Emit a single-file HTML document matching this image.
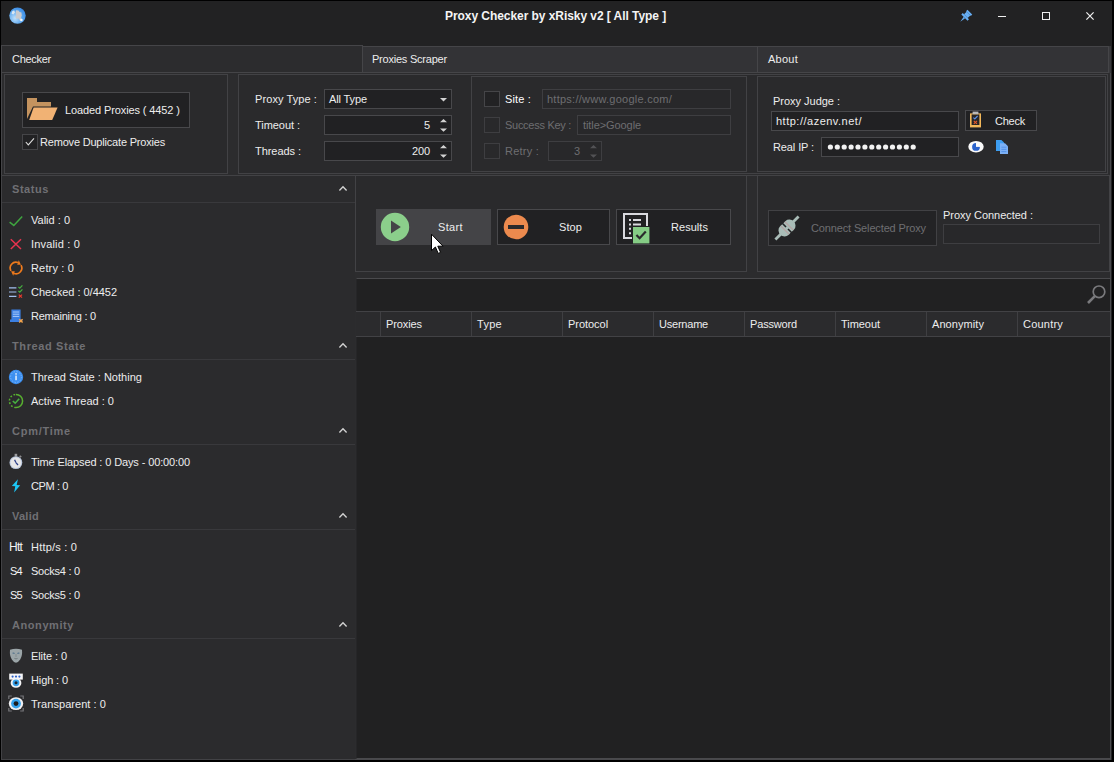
<!DOCTYPE html>
<html lang="en">
<head>
<meta charset="utf-8">
<title>Proxy Checker by xRisky v2 [ All Type ]</title>
<style>
*{box-sizing:border-box;margin:0;padding:0}
html,body{width:1114px;height:762px;overflow:hidden;background:#000}
body{position:relative;font-family:"Liberation Sans",sans-serif;font-size:11px;color:#ededed;line-height:14px}
.a{position:absolute}
.t{position:absolute;white-space:nowrap;height:14px;line-height:14px}
.box{position:absolute;border:1px solid #424245;background:#2a2a2c}
.inp{position:absolute;border:1px solid #48484b;background:#212123}
.inpd{position:absolute;border:1px solid #3e3e41;background:#28282a}
.btn{position:absolute;border:1px solid #48484b;background:#212123}
.cb{position:absolute;width:16px;height:16px;border:1px solid #454548;background:#222224}
.cbd{position:absolute;width:16px;height:16px;border:1px solid #3e3e41;background:#29292b}
.hl{position:absolute;height:1px;background:#424245}
.vl{position:absolute;width:1px;background:#3f3f42}
.sep{position:absolute;left:2px;width:353px;height:1px;background:#39393c}
svg{position:absolute;overflow:visible}
</style>
</head>
<body>
<!-- window frame -->
<div class="a" style="left:1px;top:1px;width:1111px;height:759px;background:#222223"></div>

<!-- tab strip -->
<div class="a" style="left:362px;top:46px;width:747px;height:27px;background:#333336;border:1px solid #454548"></div>
<div class="vl" style="left:757px;top:47px;height:25px;background:#454548"></div>
<div class="a" style="left:1px;top:45px;width:362px;height:28px;background:#2c2c2e;border:1px solid #454548"></div>

<div class="a" style="left:1109px;top:46px;width:2px;height:27px;background:#38383b"></div>
<!-- tab page -->
<div class="a" style="left:1px;top:73px;width:1110px;height:687px;background:#2c2c2e;border-left:1px solid #454548;border-right:1px solid #48484b;border-bottom:1px solid #48484b"></div>

<!-- row 1 boxes -->
<div class="box" style="left:4px;top:74px;width:224px;height:100px"></div>
<div class="box" style="left:238px;top:74px;width:870px;height:100px"></div>
<div class="box" style="left:471px;top:76px;width:276px;height:96px"></div>
<div class="box" style="left:757px;top:76px;width:349px;height:96px"></div>

<!-- row 2 -->
<div class="hl" style="left:2px;top:175px;width:1108px"></div>
<div class="box" style="left:355px;top:175px;width:392px;height:97px"></div>
<div class="box" style="left:757px;top:175px;width:353px;height:97px"></div>

<!-- left panel -->
<div class="a" style="left:1px;top:175px;width:354px;height:585px;background:#2b2b2d;border:1px solid #424245;border-right:none"></div>
<div class="sep" style="top:202px"></div>
<div class="sep" style="top:359px"></div>
<div class="sep" style="top:444px"></div>
<div class="sep" style="top:529px"></div>
<div class="sep" style="top:638px"></div>

<!-- grid -->
<div class="a" style="left:356px;top:278px;width:755px;height:481px;background:#212122;border:1px solid #4a4a4d;border-left:1px solid #262628"></div>
<div class="a" style="left:356px;top:311px;width:754px;height:26px;background:#2b2b2d;border-top:1px solid #424245;border-bottom:1px solid #424245"></div>
<div class="vl" style="left:380px;top:312px;height:24px"></div>
<div class="vl" style="left:471px;top:312px;height:24px"></div>
<div class="vl" style="left:562px;top:312px;height:24px"></div>
<div class="vl" style="left:653px;top:312px;height:24px"></div>
<div class="vl" style="left:744px;top:312px;height:24px"></div>
<div class="vl" style="left:835px;top:312px;height:24px"></div>
<div class="vl" style="left:926px;top:312px;height:24px"></div>
<div class="vl" style="left:1017px;top:312px;height:24px"></div>

<!-- controls row 1 -->
<div class="btn" style="left:22px;top:92px;width:168px;height:36px"></div>
<div class="cb" style="left:22px;top:134px"></div>
<div class="inp" style="left:324px;top:89px;width:128px;height:20px"></div>
<div class="inp" style="left:324px;top:115px;width:128px;height:20px"></div>
<div class="inp" style="left:324px;top:141px;width:128px;height:20px"></div>
<div class="cb" style="left:484px;top:91px"></div>
<div class="cbd" style="left:484px;top:117px"></div>
<div class="cbd" style="left:484px;top:143px"></div>
<div class="inpd" style="left:542px;top:89px;width:189px;height:20px"></div>
<div class="inpd" style="left:577px;top:115px;width:154px;height:20px"></div>
<div class="inpd" style="left:548px;top:141px;width:54px;height:20px"></div>
<div class="inp" style="left:771px;top:111px;width:188px;height:20px"></div>
<div class="btn" style="left:965px;top:110px;width:72px;height:21px"></div>
<div class="inp" style="left:821px;top:137px;width:138px;height:20px"></div>

<!-- controls row 2 -->
<div class="btn" style="left:376px;top:209px;width:115px;height:36px;background:#444447;border-color:#444447"></div>
<div class="btn" style="left:497px;top:209px;width:113px;height:36px"></div>
<div class="btn" style="left:616px;top:209px;width:115px;height:36px"></div>
<div class="btn" style="left:768px;top:210px;width:169px;height:36px;border-color:#414144;background:#232325"></div>
<div class="inpd" style="left:943px;top:224px;width:157px;height:20px"></div>

<!-- title bar icons -->
<svg style="left:9px;top:7px" width="17" height="17" viewBox="0 0 17 17">
  <defs><radialGradient id="gl" cx="0.35" cy="0.65" r="0.8"><stop offset="0" stop-color="#bfe0fb"/><stop offset="0.55" stop-color="#5aa6ee"/><stop offset="1" stop-color="#2f80e0"/></radialGradient></defs>
  <circle cx="8.5" cy="8.6" r="8.2" fill="url(#gl)"/>
  <path d="M7 3.2 L9.4 3.6 L10.6 5 L12.4 5.4 L12.8 8.6 L12 10.4 L12.6 12.6 L10.8 13.6 L9.6 11.6 L7.6 11.8 L6.4 10.2 L7.2 8 L6.6 6 Z" fill="#c9cace"/>
  <path d="M3 4.6 L5.2 3.2 L6 5.4 L4.4 7.4 L2.6 6.8 Z" fill="#d8e6f4"/>
  <circle cx="12.4" cy="13" r="1.3" fill="#f4f8fc"/>
</svg>
<svg style="left:960px;top:10px" width="12" height="12" viewBox="0 0 12 12">
  <g transform="rotate(45 6 6)" fill="#66aef5">
    <rect x="2.6" y="0.6" width="6.8" height="2"/>
    <rect x="3.4" y="2.6" width="5.2" height="3.6"/>
    <rect x="1.6" y="6.2" width="8.8" height="2"/>
    <path d="M5 8.2 H7 L6 14.2 Z"/>
  </g>
</svg>
<div class="a" style="left:998px;top:16px;width:8px;height:1px;background:#f0f0f0"></div>
<div class="a" style="left:1042px;top:12px;width:8px;height:8px;border:1px solid #f0f0f0"></div>
<svg style="left:1086px;top:12px" width="8" height="8" viewBox="0 0 8 8"><path d="M0.4 0.4 L7.6 7.6 M7.6 0.4 L0.4 7.6" stroke="#f0f0f0" stroke-width="1.2" fill="none"/></svg>

<!-- folder -->
<svg style="left:26px;top:97px" width="32" height="24" viewBox="0 0 32 24">
  <path d="M1 1 H11 V5 H25 V9.4 H7 L1 22 Z" fill="#c4935f"/>
  <path d="M7.6 10.6 H31.6 L26.2 23 H3.2 Z" fill="#f1b274"/>
</svg>
<!-- checkbox tick -->
<svg style="left:22px;top:134px" width="16" height="16" viewBox="0 0 16 16"><path d="M3.8 8 L6.3 10.9 L12 4.3" stroke="#e0e0e0" stroke-width="1.05" fill="none"/></svg>

<!-- combo / spin arrows -->
<svg style="left:440px;top:98px" width="7" height="4" viewBox="0 0 7 4"><path d="M0 0 H7 L3.5 3.6 Z" fill="#d2d2d2"/></svg>
<svg style="left:440px;top:119px" width="7" height="13" viewBox="0 0 7 13"><path d="M0 3.2 H7 L3.5 0 Z M0 9.4 H7 L3.5 12.8 Z" fill="#d2d2d2"/></svg>
<svg style="left:440px;top:145px" width="7" height="13" viewBox="0 0 7 13"><path d="M0 3.2 H7 L3.5 0 Z M0 9.4 H7 L3.5 12.8 Z" fill="#d2d2d2"/></svg>
<svg style="left:590px;top:145px" width="7" height="13" viewBox="0 0 7 13"><path d="M0 3.2 H7 L3.5 0 Z M0 9.4 H7 L3.5 12.8 Z" fill="#525255"/></svg>

<!-- clipboard / eye / copy -->
<svg style="left:969px;top:111px" width="13" height="17" viewBox="0 0 13 17">
  <rect x="1" y="2.4" width="11" height="14" fill="#f3b85a"/>
  <rect x="2.6" y="3.4" width="7.8" height="10.6" fill="#262628"/>
  <rect x="3.6" y="0.6" width="5.8" height="2.6" fill="#b9b9b9"/>
  <path d="M4.4 6.6 L5.8 8 L8.6 5" stroke="#5b8fe6" stroke-width="1.1" fill="none"/>
  <path d="M4.8 9.8 L8 12.8 M8 9.8 L4.8 12.8" stroke="#ea5a28" stroke-width="1.1" fill="none"/>
</svg>
<svg style="left:968px;top:140px" width="16" height="13" viewBox="0 0 16 13">
  <ellipse cx="8" cy="6.7" rx="7.7" ry="5.8" fill="#fafafa"/>
  <circle cx="8" cy="6.9" r="3.9" fill="#2b63cc"/>
  <path d="M8 6.9 L8 2.6 L12.2 2.6 L12.2 6.9 Z" fill="#fafafa"/>
</svg>
<svg style="left:995px;top:139px" width="14" height="16" viewBox="0 0 14 16">
  <path d="M1 1 H6.4 L9 3.6 V12 H1 Z" fill="#3d9df0"/>
  <path d="M5 4.2 H10 L13 7.2 V15 H5 Z" fill="#7db1f6"/>
  <path d="M6.4 8.2 H11.4 M6.4 10.4 H11.4 M6.4 12.6 H11.4" stroke="#4f8fe8" stroke-width="0.9"/>
</svg>

<!-- start / stop / results -->
<svg style="left:380px;top:212px" width="30" height="30" viewBox="0 0 30 30">
  <circle cx="15" cy="15" r="14.2" fill="#8bcf8b"/>
  <path d="M11 8.6 V21.4 L20.8 15 Z" fill="#444447"/>
</svg>
<svg style="left:503px;top:214px" width="26" height="26" viewBox="0 0 26 26">
  <circle cx="13" cy="13" r="12.3" fill="#ec8a4e"/>
  <rect x="5" y="11" width="16" height="4" fill="#2a2a2c"/>
</svg>
<svg style="left:622px;top:212px" width="28" height="32" viewBox="0 0 28 32">
  <path d="M10 26 H2 V2 H25 V14" stroke="#d9d9de" stroke-width="2" fill="none"/>
  <path d="M7 7 h2 v2 h-2 z M7 11.4 h2 v2 h-2 z M7 15.8 h2 v2 h-2 z M7 20.2 h2 v2 h-2 z" fill="#d9d9de"/>
  <path d="M11 7 h8 v2 h-8 z M11 11.4 h8 v2 h-8 z" fill="#d9d9de"/>
  <rect x="11" y="15" width="16.4" height="16.4" fill="#85cc85"/>
  <path d="M14.4 23 L17.6 26.2 L23.8 19.6" stroke="#2a2a2c" stroke-width="2.2" fill="none"/>
</svg>

<!-- connect plug -->
<svg style="left:774px;top:215px" width="26" height="26" viewBox="0 0 26 26">
  <g transform="rotate(-45 13 13)">
    <rect x="-3.4" y="11.6" width="32.8" height="2.8" fill="#a9bcb7"/>
    <path d="M12.2 7 H9 A5.4 6 0 0 0 9 19 H12.2 Z" fill="#a9bcb7"/>
    <path d="M13.8 7 H17 A5.4 6 0 0 1 17 19 H13.8 Z" fill="#a9bcb7"/>
    <rect x="9.4" y="7" width="1.3" height="12" fill="#b5a3a3"/>
    <rect x="15.3" y="7" width="1.3" height="12" fill="#b5a3a3"/>
  </g>
</svg>

<!-- magnifier -->
<svg style="left:1086px;top:284px" width="21" height="21" viewBox="0 0 21 21">
  <circle cx="13" cy="7.8" r="5.8" fill="none" stroke="#7a7a7d" stroke-width="1.7"/>
  <path d="M8.8 12.2 L2 19" stroke="#7a7a7d" stroke-width="2.6" fill="none"/>
</svg>

<!-- chevrons -->
<svg style="left:338px;top:185px" width="10" height="7" viewBox="0 0 10 7"><path d="M1.4 5.4 L5 1.8 L8.6 5.4" stroke="#d4d4d4" stroke-width="1.35" fill="none"/></svg>
<svg style="left:338px;top:342px" width="10" height="7" viewBox="0 0 10 7"><path d="M1.4 5.4 L5 1.8 L8.6 5.4" stroke="#d4d4d4" stroke-width="1.35" fill="none"/></svg>
<svg style="left:338px;top:427px" width="10" height="7" viewBox="0 0 10 7"><path d="M1.4 5.4 L5 1.8 L8.6 5.4" stroke="#d4d4d4" stroke-width="1.35" fill="none"/></svg>
<svg style="left:338px;top:512px" width="10" height="7" viewBox="0 0 10 7"><path d="M1.4 5.4 L5 1.8 L8.6 5.4" stroke="#d4d4d4" stroke-width="1.35" fill="none"/></svg>
<svg style="left:338px;top:621px" width="10" height="7" viewBox="0 0 10 7"><path d="M1.4 5.4 L5 1.8 L8.6 5.4" stroke="#d4d4d4" stroke-width="1.35" fill="none"/></svg>

<!-- status icons -->
<svg style="left:8px;top:212px" width="16" height="16" viewBox="0 0 16 16"><path d="M1.6 10.2 L5.8 13.4 L14.2 4.6" stroke="#3fa640" stroke-width="1.5" fill="none"/></svg>
<svg style="left:8px;top:236px" width="16" height="16" viewBox="0 0 16 16"><path d="M2.8 3.2 L13 13 M13 3.2 L2.8 13" stroke="#e8334e" stroke-width="1.5" fill="none"/></svg>
<svg style="left:8px;top:260px" width="16" height="16" viewBox="0 0 16 16">
  <path d="M2.98 10.9 A5.8 5.8 0 0 1 9.98 2.55" stroke="#ee7a1c" stroke-width="1.7" fill="none"/>
  <path d="M13.02 5.1 A5.8 5.8 0 0 1 6.02 13.45" stroke="#ee7a1c" stroke-width="1.7" fill="none"/>
  <path d="M9.16 4.8 L10.8 0.3 L12.9 4.7 Z" fill="#ee7a1c"/>
  <path d="M6.84 11.2 L5.2 15.7 L3.1 11.3 Z" fill="#ee7a1c"/>
</svg>
<svg style="left:8px;top:284px" width="16" height="16" viewBox="0 0 16 16">
  <path d="M1 3.8 H8.4 M1 8 H8.4 M1 12.4 H8.4" stroke="#a3c0f0" stroke-width="1.2"/>
  <path d="M10.4 2.8 L11.8 4.2 L14.4 1.4" stroke="#46b040" stroke-width="1.2" fill="none"/>
  <path d="M10.4 6.8 L11.8 8.2 L14.4 5.4" stroke="#46b040" stroke-width="1.2" fill="none"/>
  <path d="M10.8 10.6 L14 13.6 M14 10.6 L10.8 13.6" stroke="#e63a2e" stroke-width="1.3" fill="none"/>
</svg>
<svg style="left:8px;top:308px" width="16" height="16" viewBox="0 0 16 16">
  <path d="M3.4 1.6 H12.6 V11.4 H14.2 V14 H2 V11.4 H3.4 Z" fill="#3b7fe2"/>
  <path d="M4.8 4 H11.2 M4.8 6.2 H11.2 M4.8 8.4 H11.2" stroke="#a9cbfa" stroke-width="1"/>
  <path d="M11.2 11.2 L14.6 14.6 M14.6 11.2 L11.2 14.6" stroke="#f2a24a" stroke-width="1.4"/>
</svg>

<!-- thread icons -->
<svg style="left:8px;top:369px" width="16" height="16" viewBox="0 0 16 16">
  <circle cx="8" cy="8" r="7.2" fill="#3c8ff0"/>
  <circle cx="8" cy="8" r="5.4" fill="none" stroke="#7db8fa" stroke-width="1" stroke-dasharray="1.4 1.4"/>
  <rect x="7.3" y="6.6" width="1.5" height="4.6" fill="#e4f0ff"/>
  <rect x="7.3" y="4.2" width="1.5" height="1.5" fill="#e4f0ff"/>
</svg>
<svg style="left:8px;top:393px" width="16" height="16" viewBox="0 0 16 16">
  <path d="M8 1.4 A6.6 6.6 0 0 1 8 14.6" stroke="#58b030" stroke-width="1.5" fill="none"/>
  <path d="M8 14.6 A6.6 6.6 0 0 1 8 1.4" stroke="#58b030" stroke-width="1.5" fill="none" stroke-dasharray="1.8 1.8"/>
  <path d="M4.8 8 L7.2 10.2 L11.2 5.8" stroke="#46b040" stroke-width="1.6" fill="none"/>
</svg>

<!-- cpm/time icons -->
<svg style="left:8px;top:453px" width="16" height="18" viewBox="0 0 16 18">
  <rect x="6.6" y="0.8" width="2.6" height="2.6" fill="#9c9c9e"/>
  <rect x="11.4" y="2.6" width="2" height="1.8" fill="#8c8c8e" transform="rotate(40 12.4 3.5)"/>
  <circle cx="7.9" cy="9.6" r="6.4" fill="#b9c6dc"/>
  <circle cx="7.9" cy="9.6" r="5.4" fill="#e6e6e8"/>
  <path d="M7.9 9.6 L6.6 6.8 M7.9 9.6 L10 12" stroke="#2c3f8a" stroke-width="1.3"/>
</svg>
<svg style="left:11px;top:479px" width="10" height="14" viewBox="0 0 10 14">
  <path d="M6.9 0.2 L0.8 7.1 L4.3 7.3 L3.1 13.4 L9.2 6.3 L5.7 6.1 Z" fill="#1cc6f6"/>
</svg>

<!-- anonymity icons -->
<svg style="left:9px;top:648px" width="14" height="16" viewBox="0 0 14 16">
  <path d="M1 1.8 Q7 -0.2 13 1.8 Q13.6 8 11.2 11.4 Q9.2 14.4 7 14.8 Q4.8 14.4 2.8 11.4 Q0.4 8 1 1.8 Z" fill="#9ba5a8"/>
  <path d="M3 5 Q4.6 3.8 6 5.2 Q4.6 6.4 3 5 Z M8 5.2 Q9.4 3.8 11 5 Q9.4 6.4 8 5.2 Z" fill="#4d6f8a"/>
  <path d="M5.4 10.4 Q7 11.4 8.6 10.4" stroke="#6c7679" stroke-width="0.9" fill="none"/>
  <path d="M7 6 V9" stroke="#7f898c" stroke-width="0.8"/>
</svg>
<svg style="left:8px;top:672px" width="16" height="17" viewBox="0 0 16 17">
  <rect x="1.2" y="1.6" width="13.6" height="6" fill="#f4f4f6"/>
  <circle cx="4.6" cy="4.6" r="1.1" fill="#2f62c8"/><circle cx="8" cy="4.6" r="1.1" fill="#2f62c8"/><circle cx="11.4" cy="4.6" r="1.1" fill="#2f62c8"/>
  <ellipse cx="8" cy="11" rx="5.4" ry="4.8" fill="#f4f4f6"/>
  <circle cx="8" cy="10.8" r="3.4" fill="#36a3ee"/>
  <circle cx="8" cy="10.8" r="1.5" fill="#1d2530"/>
</svg>
<svg style="left:8px;top:695px" width="16" height="17" viewBox="0 0 16 17">
  <path d="M0.8 4 V1 H3.8 M12.2 1 H15.2 V4 M15.2 13 V16 H12.2 M3.8 16 H0.8 V13" stroke="#77777a" stroke-width="1.2" fill="none"/>
  <ellipse cx="8" cy="8.6" rx="7.2" ry="6.4" fill="#f0f0f2"/>
  <circle cx="8" cy="8.6" r="4.9" fill="#36a3ee"/>
  <circle cx="8" cy="8.6" r="2.4" fill="#1c1c1e"/>
</svg>

<!-- password dots -->
<svg style="left:826px;top:143px" width="94" height="8" viewBox="0 0 94 8">
  <g fill="#f2f2f2"><circle cx="4.4" cy="4" r="2.6"/><circle cx="11.3" cy="4" r="2.6"/><circle cx="18.2" cy="4" r="2.6"/><circle cx="25.1" cy="4" r="2.6"/><circle cx="32" cy="4" r="2.6"/><circle cx="38.9" cy="4" r="2.6"/><circle cx="45.8" cy="4" r="2.6"/><circle cx="52.7" cy="4" r="2.6"/><circle cx="59.6" cy="4" r="2.6"/><circle cx="66.5" cy="4" r="2.6"/><circle cx="73.4" cy="4" r="2.6"/><circle cx="80.3" cy="4" r="2.6"/><circle cx="87.2" cy="4" r="2.6"/></g>
</svg>

<!-- mouse cursor -->
<svg style="left:430px;top:233px" width="15" height="22" viewBox="0 0 15 22">
  <path d="M1.5 1.2 V17.6 L5.4 14 L8.2 20.4 L10.6 19.4 L7.8 13.2 H13 Z" fill="#ffffff" stroke="#000" stroke-width="1" stroke-linejoin="miter"/>
</svg>


<div class="t" id="t0" style="left:445px;top:9px;color:#f4f4f4;font-weight:bold;font-size:12px;letter-spacing:-0.06px;">Proxy Checker by xRisky v2 [ All Type ]</div>
<div class="t" id="t1" style="left:12px;top:52px;letter-spacing:-0.28px;">Checker</div>
<div class="t" id="t2" style="left:372px;top:52px;letter-spacing:-0.22px;">Proxies Scraper</div>
<div class="t" id="t3" style="left:768px;top:52px;letter-spacing:0.25px;">About</div>
<div class="t" id="t4" style="left:65px;top:103px;letter-spacing:-0.11px;">Loaded Proxies ( 4452 )</div>
<div class="t" id="t5" style="left:40px;top:135px;letter-spacing:-0.19px;">Remove Duplicate Proxies</div>
<div class="t" id="t6" style="left:255px;top:92px;letter-spacing:0.09px;">Proxy Type :</div>
<div class="t" id="t7" style="left:255px;top:118px;letter-spacing:-0.05px;">Timeout :</div>
<div class="t" id="t8" style="left:255px;top:144px;letter-spacing:-0.05px;">Threads :</div>
<div class="t" id="t9" style="left:329px;top:92px;letter-spacing:-0.12px;">All Type</div>
<div class="t" id="t10" style="left:424px;top:118px;letter-spacing:-0.12px;">5</div>
<div class="t" id="t11" style="left:412px;top:144px;letter-spacing:-0.12px;">200</div>
<div class="t" id="t12" style="left:505px;top:92px;color:#ffffff;letter-spacing:0.15px;">Site :</div>
<div class="t" id="t13" style="left:547px;top:92px;color:#6e6e71;letter-spacing:0.25px;">https://www.google.com/</div>
<div class="t" id="t14" style="left:505px;top:118px;color:#6e6e71;letter-spacing:-0.28px;">Success Key :</div>
<div class="t" id="t15" style="left:583px;top:118px;color:#6e6e71;letter-spacing:-0.08px;">title&gt;Google</div>
<div class="t" id="t16" style="left:505px;top:144px;color:#6e6e71;letter-spacing:0.23px;">Retry :</div>
<div class="t" id="t17" style="left:574px;top:144px;color:#6e6e71;letter-spacing:-0.12px;">3</div>
<div class="t" id="t18" style="left:773px;top:94px;letter-spacing:-0.02px;">Proxy Judge :</div>
<div class="t" id="t19" style="left:776px;top:114px;letter-spacing:0.50px;">http://azenv.net/</div>
<div class="t" id="t20" style="left:995px;top:114px;letter-spacing:-0.24px;">Check</div>
<div class="t" id="t21" style="left:773px;top:140px;letter-spacing:-0.11px;">Real IP :</div>
<div class="t" id="t22" style="left:438px;top:220px;letter-spacing:0.35px;">Start</div>
<div class="t" id="t23" style="left:559px;top:220px;letter-spacing:0.09px;">Stop</div>
<div class="t" id="t24" style="left:671px;top:220px;letter-spacing:0.04px;">Results</div>
<div class="t" id="t25" style="left:811px;top:221px;color:#6e6e71;letter-spacing:-0.14px;">Connect Selected Proxy</div>
<div class="t" id="t26" style="left:943px;top:208px;letter-spacing:-0.03px;">Proxy Connected :</div>
<div class="t" id="t27" style="left:386px;top:317px;letter-spacing:-0.10px;">Proxies</div>
<div class="t" id="t28" style="left:477px;top:317px;letter-spacing:0.29px;">Type</div>
<div class="t" id="t29" style="left:568px;top:317px;letter-spacing:-0.04px;">Protocol</div>
<div class="t" id="t30" style="left:659px;top:317px;letter-spacing:-0.22px;">Username</div>
<div class="t" id="t31" style="left:750px;top:317px;letter-spacing:-0.16px;">Password</div>
<div class="t" id="t32" style="left:841px;top:317px;letter-spacing:-0.05px;">Timeout</div>
<div class="t" id="t33" style="left:932px;top:317px;letter-spacing:0.07px;">Anonymity</div>
<div class="t" id="t34" style="left:1023px;top:317px;letter-spacing:0.21px;">Country</div>
<div class="t" id="t35" style="left:31px;top:213px;letter-spacing:0.01px;">Valid : 0</div>
<div class="t" id="t36" style="left:31px;top:237px;letter-spacing:0.17px;">Invalid : 0</div>
<div class="t" id="t37" style="left:31px;top:261px;letter-spacing:0.16px;">Retry : 0</div>
<div class="t" id="t38" style="left:31px;top:285px;letter-spacing:-0.01px;">Checked : 0/4452</div>
<div class="t" id="t39" style="left:31px;top:309px;letter-spacing:-0.22px;">Remaining : 0</div>
<div class="t" id="t40" style="left:31px;top:370px;letter-spacing:0.01px;">Thread State : Nothing</div>
<div class="t" id="t41" style="left:31px;top:394px;">Active Thread : 0</div>
<div class="t" id="t42" style="left:31px;top:455px;letter-spacing:-0.12px;">Time Elapsed : 0 Days - 00:00:00</div>
<div class="t" id="t43" style="left:31px;top:479px;letter-spacing:-0.39px;">CPM : 0</div>
<div class="t" id="t44" style="left:31px;top:540px;letter-spacing:0.20px;">Http/s : 0</div>
<div class="t" id="t45" style="left:31px;top:564px;letter-spacing:-0.24px;">Socks4 : 0</div>
<div class="t" id="t46" style="left:31px;top:588px;letter-spacing:-0.24px;">Socks5 : 0</div>
<div class="t" id="t47" style="left:31px;top:649px;letter-spacing:-0.08px;">Elite : 0</div>
<div class="t" id="t48" style="left:31px;top:673px;letter-spacing:-0.12px;">High : 0</div>
<div class="t" id="t49" style="left:31px;top:697px;letter-spacing:0.05px;">Transparent : 0</div>
<div class="t" id="t50" style="left:12px;top:182px;color:#707074;font-weight:bold;letter-spacing:0.56px;">Status</div>
<div class="t" id="t51" style="left:12px;top:339px;color:#707074;font-weight:bold;letter-spacing:0.61px;">Thread State</div>
<div class="t" id="t52" style="left:12px;top:424px;color:#707074;font-weight:bold;letter-spacing:0.75px;">Cpm/Time</div>
<div class="t" id="t53" style="left:12px;top:509px;color:#707074;font-weight:bold;letter-spacing:0.26px;">Valid</div>
<div class="t" id="t54" style="left:12px;top:618px;color:#707074;font-weight:bold;letter-spacing:0.57px;">Anonymity</div>
<div class="t" id="t55" style="left:9px;top:540px;color:#f4f4f4;font-size:12px;letter-spacing:-0.78px;">Htt</div>
<div class="t" id="t56" style="left:10px;top:564px;color:#f4f4f4;letter-spacing:-0.73px;">S4</div>
<div class="t" id="t57" style="left:10px;top:588px;color:#f4f4f4;letter-spacing:-0.73px;">S5</div>

</body>
</html>
